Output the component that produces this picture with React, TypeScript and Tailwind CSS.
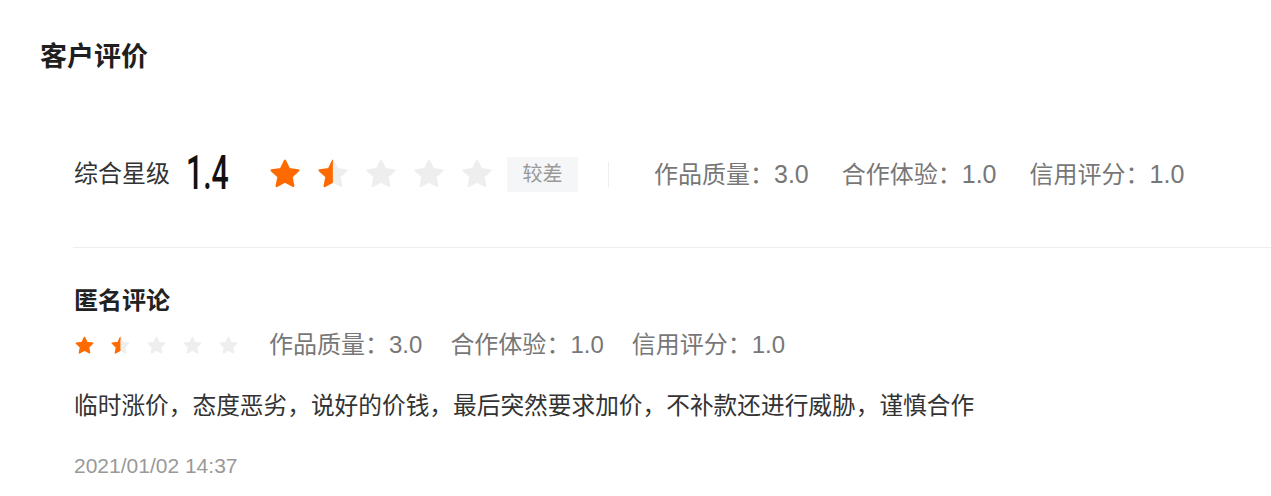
const FONT = { fontFamily: '"Liberation Sans", "Noto Sans CJK SC", sans-serif' };

const STAR = "M12 2.6l2.85 5.95 6.55.85-4.8 4.55 1.25 6.5L12 17.3l-5.85 3.15 1.25-6.5-4.8-4.55 6.55-.85z";

function Star({ size, fill, id }: { size: number; fill: "full" | "half" | "empty"; id: string }) {
  const on = "#ff6a00";
  const off = "#eeeeee";
  return (
    <svg width={size} height={size} viewBox="0 0 24 24" className="shrink-0">
      <defs>
        <clipPath id={id}>
          <rect x="0" y="0" width="11.9" height="24" />
        </clipPath>
      </defs>
      <path d={STAR} fill={fill === "full" ? on : off} stroke={fill === "full" ? on : off} strokeWidth="1.6" strokeLinejoin="round" />
      {fill === "half" && (
        <path d={STAR} fill={on} stroke={on} strokeWidth="1.6" strokeLinejoin="round" clipPath={`url(#${id})`} />
      )}
    </svg>
  );
}

function Stars({ size, gap, prefix }: { size: number; gap: string; prefix: string }) {
  const fills: ("full" | "half" | "empty")[] = ["full", "half", "empty", "empty", "empty"];
  return (
    <div className={`flex items-center ${gap}`}>
      {fills.map((f, i) => (
        <Star key={i} size={size} fill={f} id={`${prefix}-${i}`} />
      ))}
    </div>
  );
}

const metrics = [
  ["作品质量", "3.0"],
  ["合作体验", "1.0"],
  ["信用评分", "1.0"],
];

export default function App() {
  return (
    <div className="h-[496px] w-[1271px] overflow-hidden bg-white" style={FONT}>
      <h2 className="pl-[40px] pt-[41px] text-[27px] font-bold leading-[32px] text-[#1f1f1f]">客户评价</h2>

      <div className="ml-[73px]">
        <div className="mt-[81px] box-content flex h-[40px] items-center border-b border-[#eeeeee] pb-[53px]">
          <span className="ml-[1px] text-[24px] leading-[32px] text-[#333333]">综合星级</span>
          <span className="ml-[16px] w-[43px] overflow-visible">
            <span
              className="inline-block origin-left scale-x-[0.63] text-[48px] font-medium leading-[40px] text-[#111111]"
              style={{ fontFamily: "Roboto, sans-serif" }}
            >
              1.4
            </span>
          </span>
          <div className="ml-[39px]">
            <Stars size={34} gap="gap-[14px]" prefix="big" />
          </div>
          <span className="ml-[13px] flex h-[35px] w-[71px] items-center justify-center bg-[#f5f6f7] text-[20px] text-[#999999]">较差</span>
          <span className="ml-[30px] h-[25px] w-px bg-[#eeeeee]" />
          <div className="ml-[45px] flex items-center gap-[33px]">
            {metrics.map(([k, v]) => (
              <span key={k} className="text-[24px] leading-[32px] text-[#777777]">
                {k}：<span className="text-[25px]">{v}</span>
              </span>
            ))}
          </div>
        </div>

        <div className="pl-[1px]">
          <div className="mt-[37px] text-[24px] font-bold leading-[32px] text-[#222222]">匿名评论</div>
          <div className="mt-[12px] flex h-[32px] items-center">
            <Stars size={21} gap="gap-[15px]" prefix="small" />
            <div className="ml-[30px] flex items-center gap-[28px]">
              {metrics.map(([k, v]) => (
                <span key={k} className="text-[24px] leading-[32px] text-[#777777]">
                  {k}：{v}
                </span>
              ))}
            </div>
          </div>
          <p className="mt-[29px] text-[23.7px] leading-[32px] text-[#333333]">
            临时涨价，态度恶劣，说好的价钱，最后突然要求加价，不补款还进行威胁，谨慎合作
          </p>
          <p className="mt-[30px] text-[21px] leading-[28px] text-[#999999]">2021/01/02 14:37</p>
        </div>
      </div>
    </div>
  );
}
